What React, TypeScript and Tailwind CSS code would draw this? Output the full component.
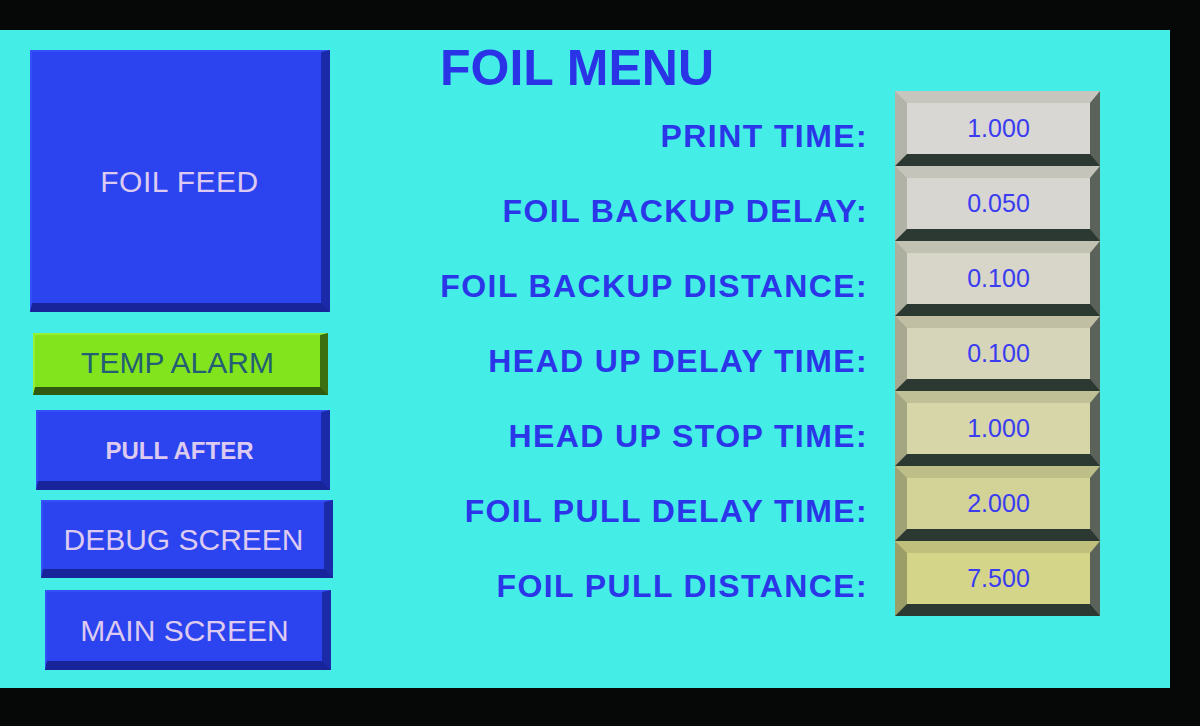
const sans = { fontFamily: '"Liberation Sans", Arial, sans-serif' }

type Row = { label: string; value: string; face: string; top: string; left: string }

const rows: Row[] = [
  { label: 'PRINT TIME:', value: '1.000', face: 'bg-[#d9d7d3]', top: 'border-t-[#c6c6be]', left: 'border-l-[#b2b4aa]' },
  { label: 'FOIL BACKUP DELAY:', value: '0.050', face: 'bg-[#d8d6d0]', top: 'border-t-[#c4c4ba]', left: 'border-l-[#b0b2a6]' },
  { label: 'FOIL BACKUP DISTANCE:', value: '0.100', face: 'bg-[#d7d6c8]', top: 'border-t-[#c2c2b2]', left: 'border-l-[#acae9e]' },
  { label: 'HEAD UP DELAY TIME:', value: '0.100', face: 'bg-[#d6d5ba]', top: 'border-t-[#c0bfa4]', left: 'border-l-[#a8a890]' },
  { label: 'HEAD UP STOP TIME:', value: '1.000', face: 'bg-[#d6d6a8]', top: 'border-t-[#c0c096]', left: 'border-l-[#a4a682]' },
  { label: 'FOIL PULL DELAY TIME:', value: '2.000', face: 'bg-[#d3d398]', top: 'border-t-[#bebe88]', left: 'border-l-[#9fa274]' },
  { label: 'FOIL PULL DISTANCE:', value: '7.500', face: 'bg-[#d5d58a]', top: 'border-t-[#c0c07c]', left: 'border-l-[#9c9e68]' },
]

function BlueButton({ label, className, textClass }: { label: string; className: string; textClass: string }) {
  return (
    <div
      className={`flex items-center justify-center border-r-[9px] border-b-[9px] border-t-2 border-l-2 border-t-[#3550f8] border-l-[#3550f8] border-r-[#1b2aa8] border-b-[#18249a] bg-[#2b44f0] pt-[8px] text-[#dccaf0] ${className}`}
    >
      <span className={textClass} style={sans}>{label}</span>
    </div>
  )
}

export default function App() {
  return (
    <div className="h-[726px] w-[1200px] overflow-hidden bg-[#050807] pt-[30px]">
      <div className="flex h-[658px] w-[1170px] bg-[#44eee6]">
        <div className="flex w-[440px] shrink-0 flex-col pl-[30px] pt-[20px]">
          <BlueButton label="FOIL FEED" className="h-[262px] w-[300px] pl-[6px]" textClass="text-[30px] tracking-[0.5px]" />
          <div
            className="mt-[21px] ml-[3px] flex h-[62px] w-[295px] items-center justify-center border-r-[8px] border-b-[8px] border-t-2 border-l-2 border-t-[#96f03a] border-l-[#96f03a] border-r-[#3c6e12] border-b-[#2f5a10] bg-[#82e41c] pt-[3px] text-[#245e74]"
          >
            <span className="text-[30px]" style={sans}>TEMP ALARM</span>
          </div>
          <BlueButton label="PULL AFTER" className="mt-[15px] ml-[6px] h-[80px] w-[294px]" textClass="text-[24px] font-bold" />
          <BlueButton label="DEBUG SCREEN" className="mt-[10px] ml-[11px] h-[78px] w-[292px]" textClass="text-[30px]" />
          <BlueButton label="MAIN SCREEN" className="mt-[12px] ml-[15px] h-[80px] w-[286px]" textClass="text-[30px]" />
        </div>

        <div className="flex flex-col pt-[15px]">
          <h1 className="h-[46px] text-[50px] leading-[46px] font-bold text-[#2a34e6]" style={sans}>
            FOIL MENU
          </h1>
          <div className="flex flex-col">
            {rows.map((row) => (
              <div key={row.label} className="flex h-[75px] items-center gap-[27px]">
                <span
                  className="w-[428px] pt-[14px] text-right text-[32px] font-bold tracking-[1.4px] text-[#2a36e8]"
                  style={sans}
                >
                  {row.label}
                </span>
                <div
                  className={`flex h-[75px] w-[205px] items-center justify-center border-t-[12px] border-l-[12px] border-r-[10px] border-b-[12px] border-r-[#5a625a] border-b-[#2c3832] ${row.face} ${row.top} ${row.left}`}
                >
                  <span className="text-[25px] text-[#3a3cf0]" style={sans}>{row.value}</span>
                </div>
              </div>
            ))}
          </div>
        </div>
      </div>
    </div>
  )
}
